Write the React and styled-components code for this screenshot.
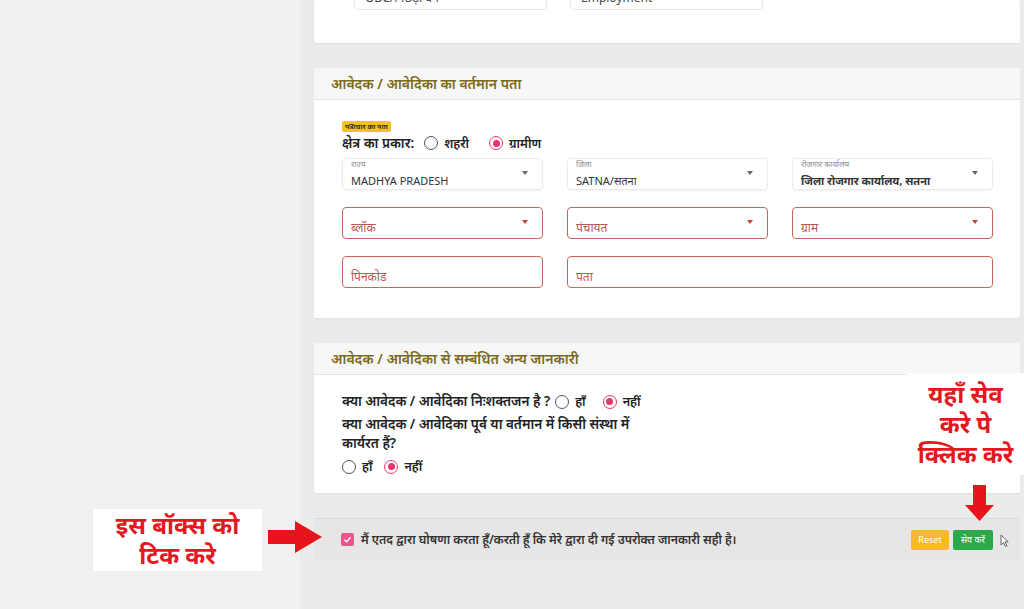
import React from 'react';
import styled, { createGlobalStyle } from 'styled-components';

const Global = createGlobalStyle`
  html, body { margin: 0; padding: 0; }
  body {
    background: #efefef;
    font-family: "Noto Sans", "Lato", sans-serif;
    color: #222;
    overflow: hidden;
  }
`;

const Page = styled.div`
  position: relative;
  display: flex;
  width: 1024px;
  height: 609px;
  overflow: hidden;
`;

const Sidebar = styled.div`
  width: 300px;
  flex: none;
  background: #f0f0f0;
`;

const Main = styled.main`
  flex: 1;
  background: #ebebeb;
  padding: 0 4px 0 14px;
  display: flex;
  flex-direction: column;
  gap: 25px;
`;

const Card = styled.section`
  background: #fff;
  border-radius: 2px;
  box-shadow: 0 1px 2px rgba(0, 0, 0, 0.05);
`;

const TopCard = styled(Card)`
  height: 43px;
  overflow: hidden;
  display: flex;
  gap: 23px;
  padding-left: 40px;
`;

const TopInput = styled.div`
  width: 193px;
  height: 32px;
  margin-top: -22px;
  border: 1px solid #e8e8e8;
  border-radius: 4px;
  box-sizing: border-box;
  padding: 10px 10px 0;
  font-size: 12px;
  color: #444;
`;

const CardHeader = styled.header`
  height: 32px;
  box-sizing: border-box;
  display: flex;
  align-items: center;
  padding: 0 17px;
  background: #f7f7f7;
  border-bottom: 1px solid #e6e6e6;
  font-size: 14px;
  font-weight: 600;
  color: #7d6a17;
`;

const AddressBody = styled.div`
  padding: 21px 27px 30px 28px;
`;

const Badge = styled.span`
  display: block;
  width: fit-content;
  height: 11px;
  line-height: 11px;
  padding: 0 3px;
  background: #f3c21d;
  border-radius: 2px;
  font-size: 7px;
  font-weight: 700;
  color: #333;
`;

const TypeRow = styled.div`
  display: flex;
  align-items: center;
  gap: 6px;
  height: 18px;
  margin-top: 2px;
  font-size: 13.5px;
  font-weight: 600;
  color: #222;
`;

const TypeLabel = styled.span`
  margin-right: 4px;
`;

const RadioItem = styled.label`
  display: inline-flex;
  align-items: center;
  gap: 6px;
  margin-right: ${p => (p.$gap ? p.$gap : 10)}px;
  font-size: 12.5px;
  font-weight: 600;
  color: #222;
`;

const RadioCircle = styled.span`
  width: 14px;
  height: 14px;
  box-sizing: border-box;
  border-radius: 50%;
  border: 1.5px solid ${p => (p.$checked ? '#e8356c' : '#555')};
  display: inline-flex;
  align-items: center;
  justify-content: center;
  background: #fff;
  flex: none;
  &::after {
    content: '';
    width: 7px;
    height: 7px;
    border-radius: 50%;
    background: ${p => (p.$checked ? '#e8356c' : 'transparent')};
  }
`;

const FieldGrid = styled.div`
  margin-top: 6px;
  display: grid;
  grid-template-columns: repeat(3, 1fr);
  grid-auto-rows: 32px;
  column-gap: 24px;
  row-gap: 17px;
`;

const Field = styled.div`
  display: flex;
  align-items: center;
  box-sizing: border-box;
  border-radius: 4px;
  border: ${p => (p.$error ? '1.5px solid #c9665e' : '1px solid #ebebeb')};
  box-shadow: ${p => (p.$error ? 'none' : '0 1px 2px rgba(0,0,0,0.06)')};
  padding: 0 14px 0 8px;
  grid-column: ${p => (p.$span ? `span ${p.$span}` : 'auto')};
`;

const FieldContent = styled.div`
  flex: 1;
  display: flex;
  flex-direction: column;
  align-self: stretch;
  min-width: 0;
`;

const FloatLabel = styled.span`
  font-size: 8px;
  line-height: 10px;
  color: #8a8a8a;
`;

const FieldValue = styled.span`
  font-size: 11px;
  line-height: 14px;
  margin-top: 5px;
  color: #333;
  font-weight: ${p => (p.$bold ? 700 : 400)};
  white-space: nowrap;
`;

const Placeholder = styled.span`
  font-size: 12px;
  line-height: 14px;
  margin-top: 13px;
  color: #b65a51;
`;

const Caret = styled.span`
  width: 0;
  height: 0;
  border-left: 3.5px solid transparent;
  border-right: 3.5px solid transparent;
  border-top: 4px solid ${p => (p.$error ? '#c0453d' : '#666')};
  margin-top: -2px;
`;

const InfoBody = styled.div`
  padding: 17px 27px 17px 28px;
  font-size: 13.5px;
  font-weight: 600;
  line-height: 19px;
  color: #222;
`;

const QuestionLine = styled.div`
  display: flex;
  align-items: center;
  gap: 5px;
  margin-bottom: 4px;
`;

const QuestionText = styled.div`
  max-width: 320px;
  margin-bottom: 4px;
`;

const RadioRow = styled.div`
  display: flex;
  align-items: center;
  height: 19px;
`;

const FooterBar = styled.div`
  position: relative;
  height: 42px;
  box-sizing: border-box;
  display: flex;
  align-items: center;
  padding: 0 27px;
  background: #e6e6e6;
  border-top: 1px solid #dcdcdc;
`;

const CheckBox = styled.span`
  width: 13px;
  height: 13px;
  border-radius: 2px;
  background: #e9568f;
  display: inline-flex;
  align-items: center;
  justify-content: center;
  flex: none;
`;

const Declaration = styled.span`
  margin-left: 7px;
  font-size: 12.2px;
  font-weight: 600;
  color: #333;
`;

const Buttons = styled.div`
  margin-left: auto;
  display: flex;
  gap: 4px;
`;

const Btn = styled.button`
  height: 20px;
  width: ${p => p.$w}px;
  border: none;
  border-radius: 2px;
  padding: 0;
  background: ${p => p.$bg};
  color: #fff;
  font-family: inherit;
  font-size: 9px;
`;

const Cursor = styled.svg`
  position: absolute;
  left: 686px;
  top: 15px;
`;

const Note = styled.div`
  position: absolute;
  left: ${p => p.$x}px;
  top: ${p => p.$y}px;
  width: ${p => p.$w}px;
  height: ${p => p.$h}px;
  background: #fff;
  color: #e3191f;
  font-size: 24px;
  font-weight: 700;
  line-height: 30px;
  text-align: center;
  display: flex;
  flex-direction: column;
  justify-content: center;
`;

const Arrow = styled.svg`
  position: absolute;
  left: ${p => p.$x}px;
  top: ${p => p.$y}px;
`;

function Radio({ checked, label, gap }) {
  return (
    <RadioItem $gap={gap}>
      <RadioCircle $checked={checked} />
      {label}
    </RadioItem>
  );
}

function Select({ label, value, bold }) {
  return (
    <Field>
      <FieldContent>
        <FloatLabel>{label}</FloatLabel>
        <FieldValue $bold={bold}>{value}</FieldValue>
      </FieldContent>
      <Caret />
    </Field>
  );
}

function ErrorField({ placeholder, select, span }) {
  return (
    <Field $error $span={span}>
      <FieldContent>
        <Placeholder>{placeholder}</Placeholder>
      </FieldContent>
      {select && <Caret $error />}
    </Field>
  );
}

export default function App() {
  return (
    <>
      <Global />
      <Page>
        <Sidebar />
        <Main>
          <TopCard>
            <TopInput>OBC/पिछड़ा वर्ग</TopInput>
            <TopInput>Employment</TopInput>
          </TopCard>

          <Card>
            <CardHeader>आवेदक / आवेदिका का वर्तमान पता</CardHeader>
            <AddressBody>
              <Badge>पत्राचार का पता</Badge>
              <TypeRow>
                <TypeLabel>क्षेत्र का प्रकार:</TypeLabel>
                <Radio label="शहरी" gap={14} />
                <Radio checked label="ग्रामीण" />
              </TypeRow>
              <FieldGrid>
                <Select label="राज्य" value="MADHYA PRADESH" />
                <Select label="जिला" value="SATNA/सतना" />
                <Select label="रोजगार कार्यालय" value="जिला रोजगार कार्यालय, सतना" bold />
                <ErrorField placeholder="ब्लॉक" select />
                <ErrorField placeholder="पंचायत" select />
                <ErrorField placeholder="ग्राम" select />
                <ErrorField placeholder="पिनकोड" />
                <ErrorField placeholder="पता" span={2} />
              </FieldGrid>
            </AddressBody>
          </Card>

          <Card>
            <CardHeader>आवेदक / आवेदिका से सम्बंधित अन्य जानकारी</CardHeader>
            <InfoBody>
              <QuestionLine>
                <span>क्या आवेदक / आवेदिका निःशक्तजन है ?</span>
                <Radio label="हाँ" gap={12} />
                <Radio checked label="नहीं" />
              </QuestionLine>
              <QuestionText>
                क्या आवेदक / आवेदिका पूर्व या वर्तमान में किसी संस्था में कार्यरत हैं?
              </QuestionText>
              <RadioRow>
                <Radio label="हाँ" gap={12} />
                <Radio checked label="नहीं" />
              </RadioRow>
            </InfoBody>
          </Card>

          <FooterBar>
            <CheckBox>
              <svg width="9" height="9" viewBox="0 0 10 10">
                <path d="M1.5 5.2 L4 7.5 L8.5 2.5" fill="none" stroke="#fff" strokeWidth="1.4" />
              </svg>
            </CheckBox>
            <Declaration>
              मैं एतद द्वारा घोषणा करता हूँ/करती हूँ कि मेरे द्वारा दी गई उपरोक्त जानकारी सही है।
            </Declaration>
            <Buttons>
              <Btn $w={38} $bg="#f7b92b">Reset</Btn>
              <Btn $w={40} $bg="#2ba94b">सेव करें</Btn>
            </Buttons>
            <Cursor width="9" height="13" viewBox="0 0 9 13">
              <path d="M1 1 L1 11 L3.5 8.5 L5.5 12.5 L7 11.8 L5 7.8 L8.2 7.8 Z" fill="#fff" stroke="#555" strokeWidth="0.9" />
            </Cursor>
          </FooterBar>
        </Main>

        <Note $x={93} $y={509} $w={169} $h={62}>
          <span>इस बॉक्स को</span>
          <span>टिक करे</span>
        </Note>
        <Arrow $x={268} $y={521} width="55" height="32" viewBox="0 0 55 32">
          <path d="M0 9 L27 9 L27 0 L54 16 L27 32 L27 23 L0 23 Z" fill="#e8141b" />
        </Arrow>

        <Note $x={907} $y={373} $w={117} $h={102}>
          <span>यहाँ सेव</span>
          <span>करे पे</span>
          <span>क्लिक करे</span>
        </Note>
        <Arrow $x={965} $y={485} width="29" height="36" viewBox="0 0 29 36">
          <path d="M8 0 L21 0 L21 20 L29 20 L14.5 36 L0 20 L8 20 Z" fill="#e8141b" />
        </Arrow>
      </Page>
    </>
  );
}
